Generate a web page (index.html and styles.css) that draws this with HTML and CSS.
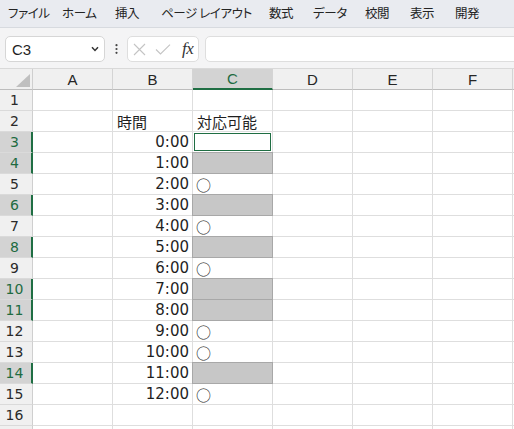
FILE: index.html
```html
<!DOCTYPE html>
<html lang="ja">
<head>
<meta charset="utf-8">
<title>Excel</title>
<link rel="stylesheet" href="styles.css">
</head>
<body>
<div class="menu">
  <span class="m1">ファイル</span><span class="m2">ホーム</span><span class="m3">挿入</span><span class="m4">ページ レイアウト</span><span class="m5">数式</span><span class="m6">データ</span><span class="m7">校閲</span><span class="m8">表示</span><span>開発</span>
</div>
<div class="fbar">
  <div class="namebox"><span>C3</span>
    <svg width="8" height="6" viewBox="0 0 8 6"><path d="M1 1.2 L4 4.4 L7 1.2" fill="none" stroke="#333" stroke-width="1.5"/></svg>
  </div>
  <div class="dots"><svg width="3" height="10" viewBox="0 0 3 10"><circle cx="1.5" cy="1.2" r="1.1" fill="#444"/><circle cx="1.5" cy="5" r="1.1" fill="#444"/><circle cx="1.5" cy="8.8" r="1.1" fill="#444"/></svg></div>
  <div class="fxbox">
    <svg class="ic-x" width="13" height="13" viewBox="0 0 13 13"><path d="M1 1 L12 12 M12 1 L1 12" stroke="#c4c4c4" stroke-width="1.1" fill="none"/></svg>
    <svg class="ic-ok" width="16" height="11" viewBox="0 0 16 11"><path d="M1 5.5 L5.5 10 L15 0.7" stroke="#c4c4c4" stroke-width="1.1" fill="none"/></svg>
    <span class="fx">fx</span>
  </div>
  <div class="input"></div>
</div>
<div class="sheet">
  <div class="corner"><svg width="14" height="13" viewBox="0 0 14 13"><polygon points="14,0 14,13 0,13" fill="#bfbfbf"/></svg></div>
  <div class="ch">A</div><div class="ch">B</div><div class="ch csel">C</div><div class="ch">D</div><div class="ch">E</div><div class="ch">F</div><div class="ch"></div>

  <div class="rh">1</div><div class="c"></div><div class="c"></div><div class="c"></div><div class="c"></div><div class="c"></div><div class="c"></div><div class="c"></div>
  <div class="rh">2</div><div class="c"></div><div class="c jp">時間</div><div class="c jp">対応可能</div><div class="c"></div><div class="c"></div><div class="c"></div><div class="c"></div>
  <div class="rh rsel">3</div><div class="c"></div><div class="c num">0:00</div><div class="c act"></div><div class="c"></div><div class="c"></div><div class="c"></div><div class="c"></div>
  <div class="rh rsel">4</div><div class="c"></div><div class="c num">1:00</div><div class="c gs"></div><div class="c"></div><div class="c"></div><div class="c"></div><div class="c"></div>
  <div class="rh">5</div><div class="c"></div><div class="c num">2:00</div><div class="c jp mk">○</div><div class="c"></div><div class="c"></div><div class="c"></div><div class="c"></div>
  <div class="rh rsel">6</div><div class="c"></div><div class="c num">3:00</div><div class="c gs"></div><div class="c"></div><div class="c"></div><div class="c"></div><div class="c"></div>
  <div class="rh">7</div><div class="c"></div><div class="c num">4:00</div><div class="c jp mk">○</div><div class="c"></div><div class="c"></div><div class="c"></div><div class="c"></div>
  <div class="rh rsel">8</div><div class="c"></div><div class="c num">5:00</div><div class="c gs"></div><div class="c"></div><div class="c"></div><div class="c"></div><div class="c"></div>
  <div class="rh">9</div><div class="c"></div><div class="c num">6:00</div><div class="c jp mk">○</div><div class="c"></div><div class="c"></div><div class="c"></div><div class="c"></div>
  <div class="rh rsel">10</div><div class="c"></div><div class="c num">7:00</div><div class="c gs"></div><div class="c"></div><div class="c"></div><div class="c"></div><div class="c"></div>
  <div class="rh rsel">11</div><div class="c"></div><div class="c num">8:00</div><div class="c gs"></div><div class="c"></div><div class="c"></div><div class="c"></div><div class="c"></div>
  <div class="rh">12</div><div class="c"></div><div class="c num">9:00</div><div class="c jp mk">○</div><div class="c"></div><div class="c"></div><div class="c"></div><div class="c"></div>
  <div class="rh">13</div><div class="c"></div><div class="c num">10:00</div><div class="c jp mk">○</div><div class="c"></div><div class="c"></div><div class="c"></div><div class="c"></div>
  <div class="rh rsel">14</div><div class="c"></div><div class="c num">11:00</div><div class="c gs"></div><div class="c"></div><div class="c"></div><div class="c"></div><div class="c"></div>
  <div class="rh">15</div><div class="c"></div><div class="c num">12:00</div><div class="c jp mk">○</div><div class="c"></div><div class="c"></div><div class="c"></div><div class="c"></div>
  <div class="rh">16</div><div class="c"></div><div class="c"></div><div class="c"></div><div class="c"></div><div class="c"></div><div class="c"></div><div class="c"></div>
  <div class="rh"></div><div class="c"></div><div class="c"></div><div class="c"></div><div class="c"></div><div class="c"></div><div class="c"></div><div class="c"></div>
</div>
</body>
</html>
```

FILE: styles.css
```css
* { box-sizing: border-box; }

body {
  margin: 0;
  width: 514px;
  height: 429px;
  overflow: hidden;
  background: #ffffff;
  font-family: "Liberation Sans", "Noto Sans CJK JP", sans-serif;
  color: #222;
}

.menu {
  height: 28px;
  background: #e9ebf0;
  border-bottom: 1px solid #d7dadf;
  display: flex;
  align-items: center;
  padding: 0 0 1px 8px;
  font-family: "Noto Sans CJK JP", sans-serif;
  font-feature-settings: "palt";
  font-size: 12.5px;
  letter-spacing: -0.4px;
  line-height: 1;
  color: #242424;
  white-space: nowrap;
}

.menu span { flex: none; }
.m1 { width: 54px; }
.m2 { width: 53px; }
.m3 { width: 46px; }
.m4 { width: 108px; }
.m5 { width: 44px; }
.m6 { width: 52px; }
.m7 { width: 45px; }
.m8 { width: 45px; }

.fbar {
  height: 41px;
  background: #f4f4f5;
  border-bottom: 1px solid #d9d9d9;
  display: flex;
  align-items: flex-start;
  padding: 8px 0 0 5px;
}

.namebox {
  width: 100px;
  height: 26px;
  background: #fff;
  border: 1px solid #d6d6d6;
  border-radius: 5px;
  display: flex;
  align-items: center;
  justify-content: space-between;
  padding: 0 5px 0 6px;
  font-size: 15px;
  color: #1f1f1f;
}

.dots {
  width: 3px;
  height: 26px;
  margin: 0 9px 0 10px;
  display: flex;
  align-items: center;
}

.fxbox {
  width: 72px;
  height: 26px;
  background: #fff;
  border: 1px solid #dedede;
  border-radius: 5px;
  display: flex;
  align-items: center;
  padding-left: 5px;
}

.ic-x { margin-right: 9px; }
.ic-ok { margin-right: 11px; margin-top: 1px; }

.fx {
  font-family: "Liberation Serif", serif;
  font-style: italic;
  font-size: 17px;
  color: #333;
  letter-spacing: -0.5px;
}

.input {
  flex: 1;
  height: 26px;
  margin: 0 -10px 0 6px;
  background: #fff;
  border: 1px solid #dedede;
  border-radius: 5px;
}

.sheet {
  display: grid;
  grid-template-columns: 33px repeat(6, 80px) 1fr;
  grid-auto-rows: 21px;
}

.corner {
  background: #f0f0f0;
  border-right: 1px solid #cfcfcf;
  border-bottom: 1px solid #bdbdbd;
  display: flex;
  align-items: flex-end;
  justify-content: flex-end;
  padding: 0 2px 2px 0;
}

.ch {
  background: #f0f0f0;
  border-right: 1px solid #d4d4d4;
  border-bottom: 1px solid #bdbdbd;
  display: flex;
  align-items: center;
  justify-content: center;
  font-size: 15px;
  color: #262626;
}

.ch.csel {
  background: #d3d3d3;
  color: #1e6b41;
  border-bottom: 2px solid #1f6e43;
}

.rh {
  background: #f0f0f0;
  border-right: 1px solid #cfcfcf;
  border-bottom: 1px solid #dadada;
  display: flex;
  align-items: center;
  justify-content: center;
  padding-right: 3px;
  font-family: "DejaVu Sans", sans-serif;
  font-size: 14px;
  color: #2a2a2a;
}

.rh.rsel {
  background: #d3d3d3;
  color: #1e6b41;
  border-right: 2px solid #1f6e43;
  padding-right: 2px;
}

.c {
  border-right: 1px solid #dedede;
  border-bottom: 1px solid #dedede;
  display: flex;
  align-items: center;
  padding: 0 4px;
  white-space: nowrap;
  font-size: 15px;
}

.num {
  justify-content: flex-end;
  padding-right: 3px;
  font-family: "DejaVu Sans", sans-serif;
  font-size: 15px;
  color: #1f1f1f;
}

.jp {
  font-family: "Noto Sans CJK JP", sans-serif;
  font-size: 15px;
  line-height: 1;
  color: #1f1f1f;
}

.mk { padding-left: 3px; }

.gs {
  background: #c7c7c7;
  border-right-color: #a8a8a8;
  border-bottom-color: #a8a8a8;
  box-shadow: -1px 0 0 #a8a8a8, 0 -1px 0 #a8a8a8, -1px -1px 0 #a8a8a8;
}

.act {
  box-shadow: inset 0 0 0 1px #ffffff, inset 0 0 0 2px #1f6e43;
}
```
